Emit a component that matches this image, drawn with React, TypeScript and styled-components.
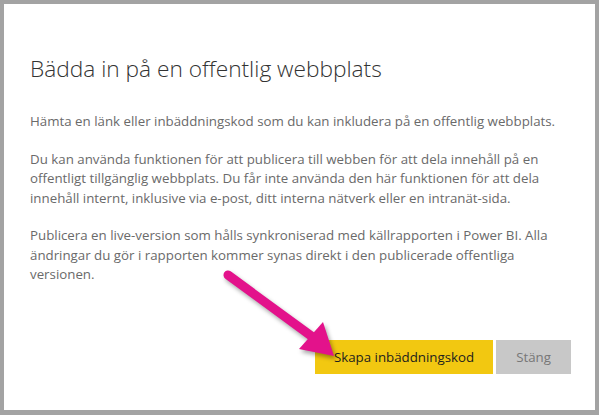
import React from "react";
import styled, { createGlobalStyle } from "styled-components";

const GlobalStyle = createGlobalStyle`
  html, body {
    margin: 0;
    padding: 0;
    background: #a3a3a3;
  }
  * {
    box-sizing: border-box;
  }
`;

const Frame = styled.div`
  position: relative;
  width: 599px;
  height: 415px;
  border-style: solid;
  border-color: #a3a3a3;
  border-width: 4px 4px 5px 4px;
  background: #fff;
  font-family: "Open Sans", "Noto Sans", "Liberation Sans", sans-serif;
  overflow: hidden;
`;

const Dialog = styled.div`
  display: flex;
  flex-direction: column;
  height: 100%;
  padding: 51px 24px 0 26px;
`;

const Title = styled.h1`
  margin: 0;
  font-size: 22.7px;
  font-weight: 300;
  line-height: 28px;
  color: #333;
`;

const Body = styled.div`
  margin-top: 29px;
  display: flex;
  flex-direction: column;
  gap: 18px;
`;

const Para = styled.p`
  margin: 0;
  font-size: 13.3px;
  line-height: 19.5px;
  color: #6a6a6a;
  white-space: nowrap;
`;

const Actions = styled.div`
  display: flex;
  justify-content: flex-end;
  gap: 3px;
  margin-top: auto;
  margin-bottom: 36px;
`;

const Button = styled.button<{ $primary?: boolean }>`
  height: 34px;
  padding: 0 ${(p) => (p.$primary ? "19px" : "20px")};
  border: none;
  font-family: inherit;
  font-size: 13.3px;
  background: ${(p) => (p.$primary ? "#f2c811" : "#c8c8c8")};
  color: ${(p) => (p.$primary ? "#1e1e1e" : "#777")};
  cursor: pointer;
`;

const Arrow = styled.svg`
  position: absolute;
  left: -4px;
  top: -4px;
  width: 599px;
  height: 415px;
  pointer-events: none;
  filter: drop-shadow(2px 3px 2px rgba(0, 0, 0, 0.35));
`;

const App: React.FC = () => {
  return (
    <>
      <GlobalStyle />
      <Frame>
        <Dialog>
          <Title>Bädda in på en offentlig webbplats</Title>
          <Body>
            <Para>Hämta en länk eller inbäddningskod som du kan inkludera på en offentlig webbplats.</Para>
            <Para>
              Du kan använda funktionen för att publicera till webben för att dela innehåll på en
              <br />
              offentligt tillgänglig webbplats. Du får inte använda den här funktionen för att dela
              <br />
              innehåll internt, inklusive via e-post, ditt interna nätverk eller en intranät-sida.
            </Para>
            <Para>
              Publicera en live-version som hålls synkroniserad med källrapporten i Power BI. Alla
              <br />
              ändringar du gör i rapporten kommer synas direkt i den publicerade offentliga
              <br />
              versionen.
            </Para>
          </Body>
          <Actions>
            <Button $primary>Skapa inbäddningskod</Button>
            <Button>Stäng</Button>
          </Actions>
        </Dialog>
        <Arrow viewBox="0 0 599 415">
          <line x1="228" y1="275" x2="314" y2="338" stroke="#e3128b" strokeWidth="9" strokeLinecap="round" />
          <polygon points="323,322 299,349 334,356" fill="#e3128b" />
        </Arrow>
      </Frame>
    </>
  );
};

export default App;
